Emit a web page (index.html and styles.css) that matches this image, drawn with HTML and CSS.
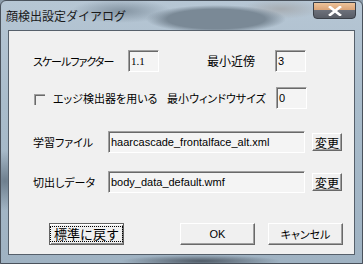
FILE: index.html
```html
<!DOCTYPE html>
<html lang="ja">

<head>
    <meta charset="UTF-8">
    <title>顔検出設定ダイアログ</title>
    <link rel="stylesheet" href="styles.css">
</head>

<body>
    <div class="window">
        <!-- Title bar -->
        <div class="titlebar">
            <span class="title">顔検出設定ダイアログ</span>
            <div class="close-btn">
                <svg width="14" height="10" viewBox="0 0 14 10">
                    <path d="M2 1 L12 9 M12 1 L2 9" stroke="#fff" stroke-width="2.6" stroke-linecap="square"/>
                </svg>
            </div>
        </div>

        <!-- Client area -->
        <div class="client">
            <div class="row row-scale">
                <span class="label label-scale">スケールファクター</span>
                <div class="field field-small mono">1.1</div>
                <span class="label label-neighbor">最小近傍</span>
                <div class="field field-small">3</div>
            </div>

            <div class="row row-edge">
                <span class="checkbox"></span>
                <span class="label label-edge">エッジ検出器を用いる</span>
                <span class="label label-minsize">最小ウィンドウサイズ</span>
                <div class="field field-small">0</div>
            </div>

            <div class="row row-file">
                <span class="label label-file">学習ファイル</span>
                <div class="field field-wide">haarcascade_frontalface_alt.xml</div>
                <div class="btn btn-small">変更</div>
            </div>

            <div class="row row-out">
                <span class="label label-file">切出しデータ</span>
                <div class="field field-wide">body_data_default.wmf</div>
                <div class="btn btn-small">変更</div>
            </div>

            <div class="row row-buttons">
                <div class="btn btn-default"><span class="focus">標準に戻す</span></div>
                <div class="btn btn-ok">OK</div>
                <div class="btn btn-cancel">キャンセル</div>
            </div>
        </div>
    </div>
</body>

</html>
```

FILE: styles.css
```css
body {
    margin: 0;
    padding: 0;
    font-family: "Noto Sans CJK JP", "Liberation Sans", sans-serif;
    font-size: 11px;
    font-feature-settings: "palt";
    color: #000;
    background: #8c9caa;
}

/* Window frame (glass) */
.window {
    width: 363px;
    height: 264px;
    box-sizing: border-box;
    border: 1px solid #4a525c;
    border-radius: 6px 6px 0 0;
    overflow: hidden;
    display: flex;
    flex-direction: column;
    background:
        radial-gradient(ellipse 70px 14px at 215px 18px, #7a8996 0%, #7a8996 70%, rgba(122, 137, 150, 0) 100%),
        radial-gradient(ellipse 50px 12px at 120px 10px, #8494a2 0%, rgba(132, 148, 162, 0) 100%),
        radial-gradient(ellipse 40px 10px at 280px 8px, #a7adb3 0%, rgba(167, 173, 179, 0) 100%),
        radial-gradient(ellipse 30px 30px at 4px 180px, #6e7f8e 0%, rgba(110, 127, 142, 0) 100%),
        radial-gradient(ellipse 80px 6px at 200px 260px, #4f5a66 0%, rgba(79, 90, 102, 0) 100%),
        linear-gradient(180deg, #b6c6d4 0%, #a9bccb 40%, #9fb2c2 100%);
}

.titlebar {
    height: 29px;
    display: flex;
    align-items: flex-start;
    justify-content: space-between;
    padding: 0 6px 0 5px;
}

.title {
    margin-top: 6px;
    font-size: 12px;
    font-feature-settings: normal;
    color: #1a1a1a;
}

.close-btn {
    margin-top: 1px;
    width: 43px;
    height: 17px;
    box-sizing: border-box;
    border: 1px solid #3a3f47;
    border-radius: 0 0 4px 4px;
    background: linear-gradient(180deg, #eec39a 0%, #dba477 45%, #6c707a 50%, #585d66 100%);
    display: flex;
    align-items: center;
    justify-content: center;
}

.close-btn svg {
    display: block;
}

/* Client area */
.client {
    margin: 0 7px 8px 7px;
    flex: 1;
    background: #f0f0f0;
    border: 1px solid #56606b;
    padding: 19px 0 0 24px;
}

.row {
    display: flex;
    align-items: center;
}

.label {
    white-space: nowrap;
    line-height: 14px;
}

.label-scale {
    width: 95px;
    letter-spacing: -1px;
}

.label-neighbor {
    width: 48px;
    margin-left: 48px;
    margin-right: 20px;
    font-size: 12px;
}

.row-edge {
    margin-top: 15px;
}

.checkbox {
    width: 11px;
    height: 11px;
    box-sizing: border-box;
    border-top: 1px solid #a0a0a0;
    border-left: 1px solid #a0a0a0;
    box-shadow: inset 1px 1px 0 #696969;
    margin: 2px 8px 0 1px;
}

.label-edge {
    width: 101px;
}

.label-minsize {
    margin-left: 13px;
    width: 96px;
    margin-right: 13px;
}

.row-file {
    margin-top: 22px;
}

.row-out {
    margin-top: 18px;
}

.label-file {
    width: 75px;
}

/* Text fields */
.field {
    height: 22px;
    box-sizing: border-box;
    border-top: 1px solid #a0a0a0;
    border-left: 1px solid #a0a0a0;
    border-right: 1px solid #ffffff;
    border-bottom: 1px solid #ffffff;
    box-shadow: inset 1px 1px 0 #696969;
    background: #f4f4f4;
    font-family: "Liberation Sans", sans-serif;
    font-size: 11px;
    line-height: 20px;
    padding: 0 0 0 2px;
    white-space: nowrap;
    overflow: hidden;
}

.field-small {
    width: 31px;
}

.mono {
    font-family: "Liberation Serif", serif;
    font-size: 11px;
}

.field-wide {
    width: 197px;
}

/* Buttons */
.btn {
    box-sizing: border-box;
    background: #f0f0f0;
    border-top: 1px solid #ffffff;
    border-left: 1px solid #ffffff;
    border-right: 1px solid #696969;
    border-bottom: 1px solid #696969;
    box-shadow: inset -1px -1px 0 #a0a0a0;
    display: flex;
    align-items: center;
    justify-content: center;
    white-space: nowrap;
}

.btn-small {
    width: 30px;
    height: 18px;
    margin-left: 7px;
    font-size: 12px;
}

.row-buttons {
    margin-top: 30px;
}

.btn-default {
    width: 75px;
    height: 22px;
    margin-left: 16px;
    border: 1px solid #646464;
    box-shadow: inset 1px 1px 0 #ffffff, inset -1px -1px 0 #8a8a8a;
    font-size: 13px;
    font-feature-settings: normal;
}

.focus {
    border: 1px dotted #000;
    padding: 0 3px;
    line-height: 14px;
}

.btn-ok {
    width: 75px;
    height: 22px;
    margin-left: 56px;
    font-family: "Liberation Sans", sans-serif;
    font-size: 11px;
}

.btn-cancel {
    width: 75px;
    height: 22px;
    margin-left: 13px;
}
```
